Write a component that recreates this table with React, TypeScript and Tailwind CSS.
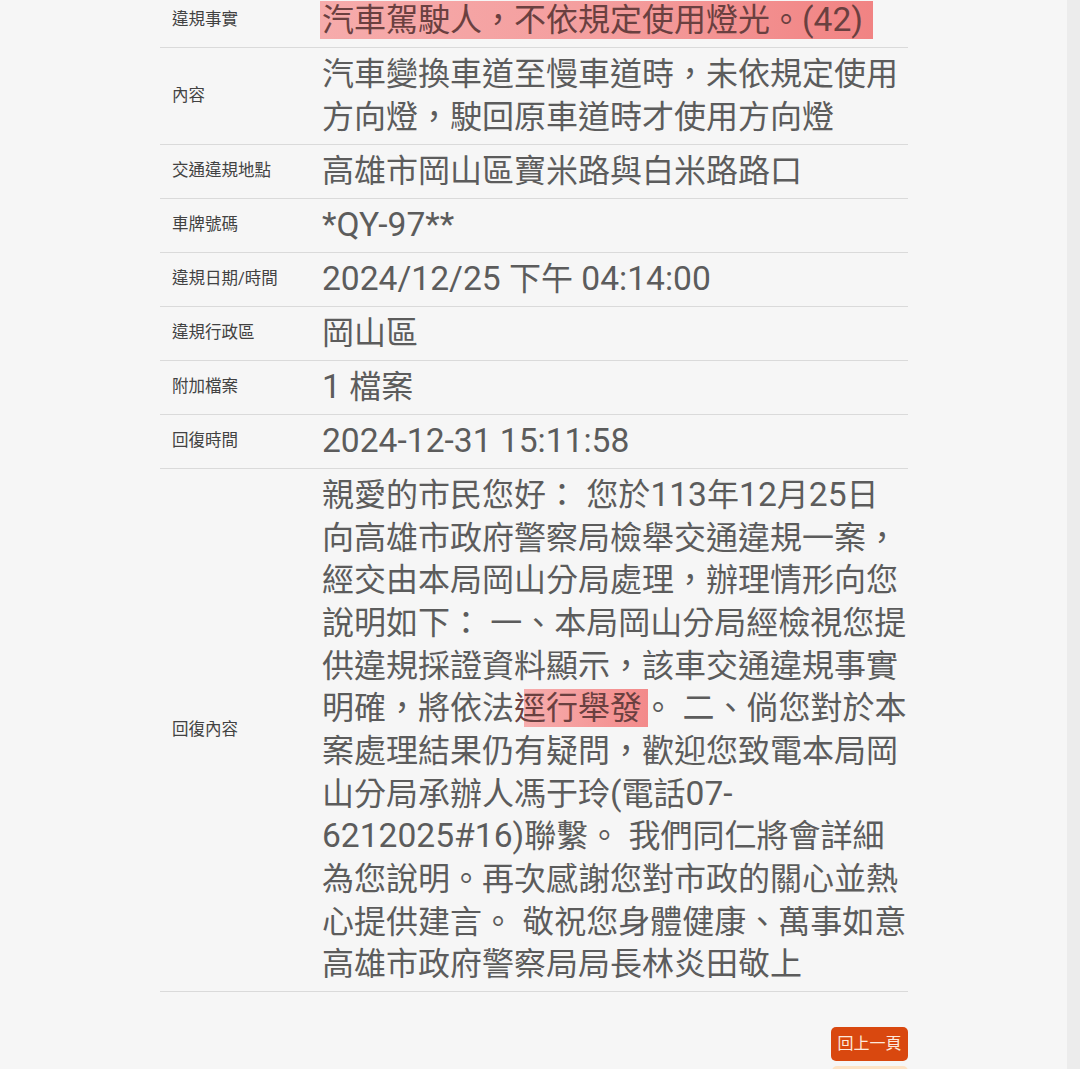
// Latin runs render a bit larger than the CJK glyphs in the source screen
function latin(text: string) {
  return text.split(/([\x00-\x7F]+)/).map((part, i) =>
    /^[\x00-\x7F]+$/.test(part) ? (
      <span key={i} className="text-[33.6px] leading-[40px]">
        {part}
      </span>
    ) : (
      part
    )
  );
}

const rows: { label: string; value: React.ReactNode }[] = [
  {
    label: "違規事實",
    value: (
      <span className="-ml-[2px] -mr-[10px] bg-gradient-to-r from-[#f6abab] via-[#f49e9e] to-[#f18383] pl-[2px] pr-[10px] text-[#6a4040]">
        {latin("汽車駕駛人，不依規定使用燈光。(42)")}
      </span>
    ),
  },
  {
    label: "內容",
    value: "汽車變換車道至慢車道時，未依規定使用方向燈，駛回原車道時才使用方向燈",
  },
  { label: "交通違規地點", value: "高雄市岡山區寶米路與白米路路口" },
  { label: "車牌號碼", value: latin("*QY-97**") },
  { label: "違規日期/時間", value: latin("2024/12/25 下午 04:14:00") },
  { label: "違規行政區", value: "岡山區" },
  { label: "附加檔案", value: latin("1 檔案") },
  { label: "回復時間", value: latin("2024-12-31 15:11:58") },
];

const reply = (
  <>
    {latin(
      "親愛的市民您好： 您於113年12月25日向高雄市政府警察局檢舉交通違規一案，經交由本局岡山分局處理，辦理情形向您說明如下： 一、本局岡山分局經檢視您提供違規採證資料顯示，該車交通違規事實明確，將依法"
    )}
    <span className="-mr-[6px] bg-[linear-gradient(to_right,transparent_10px,#f7adad_10px,#f38a8a)] pr-[6px] text-[#6a4040]">
      逕行舉發
    </span>
    {latin(
      "。 二、倘您對於本案處理結果仍有疑問，歡迎您致電本局岡山分局承辦人馮于玲(電話07-6212025#16)聯繫。 我們同仁將會詳細為您說明。再次感謝您對市政的關心並熱心提供建言。 敬祝您身體健康、萬事如意 高雄市政府警察局局長林炎田敬上"
    )}
  </>
);

export default function App() {
  return (
    <div
      className="flex h-[1069px] overflow-hidden bg-[#f6f6f6]"
      style={{ fontFamily: "Roboto, 'Noto Sans CJK TC', sans-serif" }}
    >
      <main className="flex-1">
        <div className="ml-[160px] -mt-[6px] w-[748px]">
          <div className="grid grid-cols-[150px_598px]">
            {rows.map((row, index) => (
              <div key={index} className="contents">
                <div className="flex items-center border-b border-[#dadada] pl-3 text-[16.5px] text-[#424242]">
                  {row.label}
                </div>
                <div className="border-b border-[#dadada] py-[5px] pl-3 text-[32px] leading-[43px] text-[#5c5c5c]">
                  {row.value}
                </div>
              </div>
            ))}
            <div className="flex items-center border-b border-[#dadada] pl-3 text-[16.5px] text-[#424242]">
              回復內容
            </div>
            <div className="border-b border-[#dadada] py-[5px] pl-3 text-[32px] leading-[42.67px] text-[#5c5c5c]">
              {reply}
            </div>
          </div>

          <div className="mt-[35px] flex flex-col items-end">
            <button className="h-[34px] w-[77px] rounded-[5px] bg-[#d9480f] text-[16px] text-[#fde9dc]">
              回上一頁
            </button>
            <div className="mt-[5px] h-[30px] w-[76px] rounded-[5px] bg-[#fde3c6]" />
          </div>
        </div>
      </main>
      <div className="w-[13px] bg-[#ececec]" />
    </div>
  );
}
